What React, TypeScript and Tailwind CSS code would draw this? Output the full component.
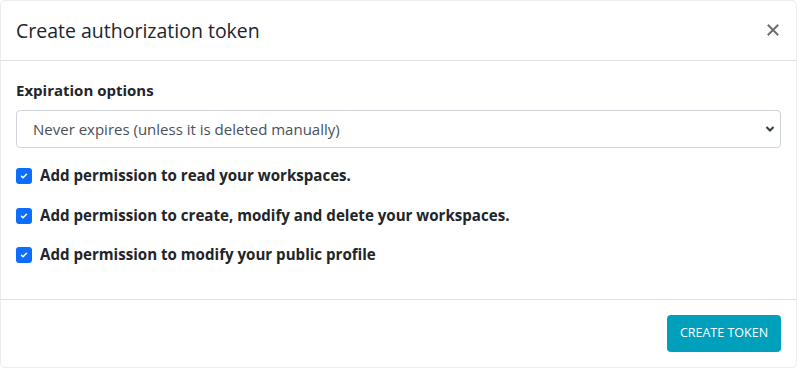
import React from "react";

function Check() {
  return (
    <span className="flex h-4 w-4 shrink-0 items-center justify-center rounded-[3px] bg-[#0d6efd]">
      <svg width="10" height="10" viewBox="0 0 20 20" fill="none">
        <path d="M5 10.5l3 3 7-7" stroke="#fff" strokeWidth="3" strokeLinecap="round" strokeLinejoin="round" />
      </svg>
    </span>
  );
}

export default function App() {
  const perms = [
    "Add permission to read your workspaces.",
    "Add permission to create, modify and delete your workspaces.",
    "Add permission to modify your public profile",
  ];
  return (
    <div className="h-[368px] w-[797px] bg-white font-['Open_Sans',sans-serif] text-[#212529]">
      <div className="flex h-[368px] flex-col rounded-[5px] border border-[#ececec] bg-white">
        <div className="flex h-[60px] items-center justify-between border-b border-[#dee2e6] pl-[15px] pr-[16px]">
          <h1 className="text-[19.5px] leading-none text-[#212529]">Create authorization token</h1>
          <svg width="12" height="12" viewBox="0 0 12 12" className="mr-[1px] mt-[-1px]">
            <path d="M1.5 1.5l9 9M10.5 1.5l-9 9" stroke="#6e6e6e" strokeWidth="2" strokeLinecap="square" />
          </svg>
        </div>
        <div className="flex flex-1 flex-col border-b border-[#dee2e6] px-[15px] pt-[19px]">
          <div className="text-[15px] font-bold leading-[20px]">Expiration options</div>
          <div className="mt-[10px] flex h-[38px] items-center justify-between rounded-[4px] border border-[#ced4da] pl-[16px] pr-[5px] text-[15px] text-[#495057]">
            <span>Never expires (unless it is deleted manually)</span>
            <svg width="10" height="8" viewBox="0 0 10 8">
              <path d="M1.5 2l3.5 3.5L8.5 2" fill="none" stroke="#343a40" strokeWidth="2" />
            </svg>
          </div>
          <div className="mt-[20px] flex flex-col gap-[23.5px]">
            {perms.map((p) => (
              <div key={p} className="flex h-[16px] items-center gap-[8px]">
                <Check />
                <span className="text-[15.1px] font-bold leading-none">{p}</span>
              </div>
            ))}
          </div>
        </div>
        <div className="flex h-[67px] items-center justify-end px-[15px]">
          <button className="h-[37px] w-[114px] rounded-[4px] bg-[#00a0bc] text-[12.5px] text-white">
            CREATE TOKEN
          </button>
        </div>
      </div>
    </div>
  );
}
